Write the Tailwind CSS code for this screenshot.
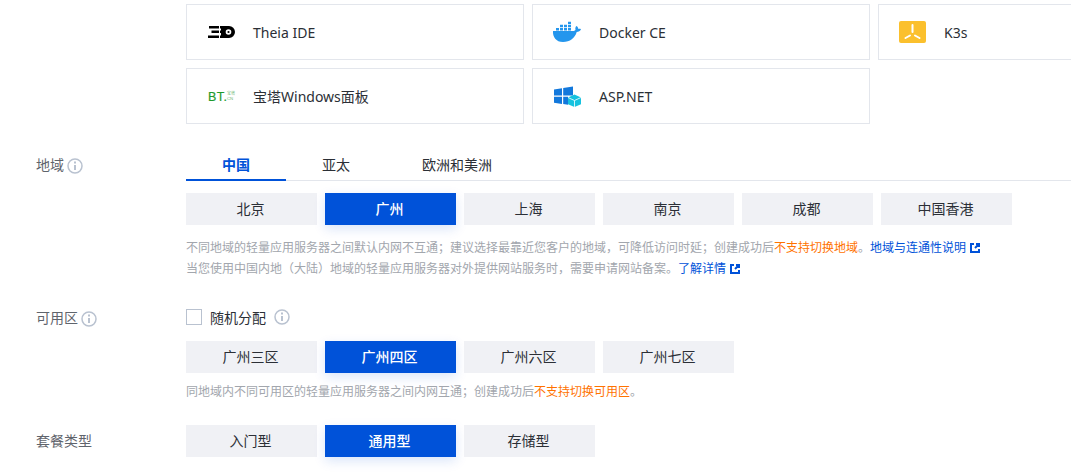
<!DOCTYPE html>
<html lang="zh-CN">
<head>
    <meta charset="UTF-8">
    <title>轻量应用服务器</title>
    <script src="https://cdn.jsdelivr.net/npm/@tailwindcss/browser@4"></script>
</head>
<body class="bg-white overflow-hidden h-[474px] w-[1071px] text-[14px] text-[#2b2f36] font-['Noto_Sans','Noto_Sans_CJK_SC',sans-serif]">

    <!-- 镜像 -->
    <div class="pl-[186px] pt-[4px] w-[1071px] overflow-hidden grid grid-cols-[338px_338px_338px] gap-2 auto-rows-[56px]">
        <div class="border border-[#e3e6ec] flex items-center">
            <svg class="ml-[21px] w-[27px] h-[14px]" viewBox="0 0 27 14">
                <path fill="#000" d="M12 1h9a6 6 0 0 1 0 12H12v-2.500h1V8h-1V5.500h1V3.500h-1z"/>
                <circle cx="20.500" cy="7" r="2.800" fill="#fff"/><circle cx="20.500" cy="7" r="1.100" fill="#000"/>
                <path fill="#000" d="M1 1h10v2.500H1zM3.500 5.500H11V8H3.500zM0 10.500h11V13H0z"/>
            </svg>
            <span class="ml-[18px]">Theia IDE</span>
        </div>
        <div class="border border-[#e3e6ec] flex items-center">
            <svg class="ml-[19px] w-[30px] h-[22px]" viewBox="0 0 30 22">
                <path fill="#2496ed" d="M1 10h20c1 0 2-.5 2.500-1-.5-2 .2-3.500 1-4 1 .7 1.700 1.700 1.800 3 1-.3 2-.2 2.700.3-.8 2-2.500 2.700-4.300 2.700C23 17 18 21 11 21 4 21 .6 16 1 10z"/>
                <path fill="#2496ed" d="M4 7h3v2.500H4zM8 7h3v2.500H8zM12 7h3v2.500h-3zM16 7h3v2.500h-3zM8 3.800h3v2.500H8zM12 3.800h3v2.500h-3zM16 3.800h3v2.500h-3zM16 .8h3v2.300h-3z"/>
            </svg>
            <span class="ml-[17px]">Docker CE</span>
        </div>
        <div class="border border-[#e3e6ec] flex items-center">
            <svg class="ml-[20px] w-[27px] h-[22px]" viewBox="0 0 27 22">
                <rect width="27" height="22" rx="2" fill="#fbc02d"/>
                <path stroke="#fff" stroke-width="2" stroke-linecap="round" fill="none" d="M13.500 4v7M6.500 17l4.500-2.500M20.500 17l-4.500-2.500"/>
            </svg>
            <span class="ml-[18px]">K3s</span>
        </div>
        <div class="border border-[#e3e6ec] flex items-center">
            <svg class="ml-[21px] w-[27px] h-[16px] overflow-visible" viewBox="0 -3 27 16">
                <text x="0" y="9.500" font-size="12.500" letter-spacing="0.400" stroke="#1e9a2c" stroke-width="0.200" fill="#1e9a2c" font-family="Liberation Sans">BT.</text>
                <text x="19" y="4.200" font-size="4" fill="#6fb878" font-family="Noto Sans CJK SC">宝塔</text>
                <text x="19" y="9.200" font-size="4.300" fill="#6fb878" font-family="Liberation Sans">CN</text>
            </svg>
            <span class="ml-[18px]">宝塔Windows面板</span>
        </div>
        <div class="border border-[#e3e6ec] flex items-center">
            <svg class="ml-[21px] w-[27px] h-[21px]" viewBox="0 0 27 21">
                <path fill="#1278dc" d="M0 3.500 8 2.300v7.200H0zM9.200 2.100 19 .6v8.900H9.200zM0 10.700h8v7.200L0 16.700zM9.200 10.700H14v8l-4.800-.7z"/>
                <path fill="#16c2df" d="M20.500 8.500 27 11.500v6.800L20.500 21 14 18.300v-6.800z"/>
                <path stroke="#fff" stroke-width=".8" fill="none" d="M14 11.500l6.500 3 6.500-3M20.500 14.500V21"/>
            </svg>
            <span class="ml-[18px]">ASP.NET</span>
        </div>
    </div>

    <!-- 地域 -->
    <div class="flex mt-[26px]">
        <div class="w-[186px] pl-[36px] pt-[5px] shrink-0 flex items-start text-[#5f646c]">
            <span class="leading-[20px]">地域</span>
            <svg class="ml-[3px] mt-[3px] w-[16px] h-[16px]" viewBox="0 0 16 16">
                <circle cx="8" cy="8" r="7" fill="none" stroke="#b9c2d0" stroke-width="1.500"/>
                <path stroke="#b9c2d0" stroke-width="2" d="M8 7v5M8 3.500v2"/>
            </svg>
        </div>
        <div class="flex-1">
            <div class="flex h-[31px] border-b border-[#e3e6ec]">
                <div class="w-[100px] h-[31px] border-b-2 border-[#0052d9] text-[#0052d9] font-bold text-center leading-[30px]">中国</div>
                <div class="w-[100px] text-center leading-[30px]">亚太</div>
                <div class="w-[142px] text-center leading-[30px]">欧洲和美洲</div>
            </div>
            <div class="flex gap-2 mt-[12px]">
                <button class="w-[131px] h-[32px] pb-[2px] pr-[2px] bg-[#f0f1f5]">北京</button>
                <button class="w-[131px] h-[32px] pb-[2px] pr-[2px] bg-[#0052d9] text-white font-medium shadow-[0_4px_12px_rgba(0,82,217,0.15)]">广州</button>
                <button class="w-[131px] h-[32px] pb-[2px] pr-[2px] bg-[#f0f1f5]">上海</button>
                <button class="w-[131px] h-[32px] pb-[2px] pr-[2px] bg-[#f0f1f5]">南京</button>
                <button class="w-[131px] h-[32px] pb-[2px] pr-[2px] bg-[#f0f1f5]">成都</button>
                <button class="w-[131px] h-[32px] pb-[2px] pr-[2px] bg-[#f0f1f5]">中国香港</button>
            </div>
            <div class="mt-[12px] text-[12px] leading-[21px] text-[#a2a6ad]">
                <p class="flex items-center">不同地域的轻量应用服务器之间默认内网不互通；建议选择最靠近您客户的地域，可降低访问时延；创建成功后<span class="text-[#ff7200]">不支持切换地域</span>。<span class="text-[#0052d9]">地域与连通性说明</span>
                    <svg class="ml-[4px] w-[10px] h-[10px]" viewBox="0 0 10 10"><path fill="none" stroke="#0052d9" stroke-width="2" d="M4 1H1v8h8V6M5 5l4-4M6 .9h3.100V4"/></svg>
                </p>
                <p class="flex items-center">当您使用中国内地（大陆）地域的轻量应用服务器对外提供网站服务时，需要申请网站备案。<span class="text-[#0052d9]">了解详情</span>
                    <svg class="ml-[4px] w-[10px] h-[10px]" viewBox="0 0 10 10"><path fill="none" stroke="#0052d9" stroke-width="2" d="M4 1H1v8h8V6M5 5l4-4M6 .9h3.100V4"/></svg>
                </p>
            </div>
        </div>
    </div>

    <!-- 可用区 -->
    <div class="flex mt-[20px]">
        <div class="w-[186px] pl-[36px] pt-[9px] shrink-0 flex items-start text-[#5f646c]">
            <span class="leading-[20px]">可用区</span>
            <svg class="ml-[3px] mt-[3px] w-[16px] h-[16px]" viewBox="0 0 16 16">
                <circle cx="8" cy="8" r="7" fill="none" stroke="#b9c2d0" stroke-width="1.500"/>
                <path stroke="#b9c2d0" stroke-width="2" d="M8 7v5M8 3.500v2"/>
            </svg>
        </div>
        <div class="flex-1">
            <div class="flex items-center h-[20px] mt-[8px]">
                <span class="w-[16px] h-[16px] border border-[#b9c2d0] bg-white"></span>
                <span class="ml-[8px]">随机分配</span>
                <svg class="ml-[8px] w-[16px] h-[16px]" viewBox="0 0 16 16">
                    <circle cx="8" cy="8" r="7" fill="none" stroke="#b9c2d0" stroke-width="1.500"/>
                    <path stroke="#b9c2d0" stroke-width="2" d="M8 7v5M8 3.500v2"/>
                </svg>
            </div>
            <div class="flex gap-2 mt-[14px]">
                <button class="w-[131px] h-[32px] pb-[2px] pr-[2px] bg-[#f0f1f5]">广州三区</button>
                <button class="w-[131px] h-[32px] pb-[2px] pr-[2px] bg-[#0052d9] text-white font-medium shadow-[0_4px_12px_rgba(0,82,217,0.15)]">广州四区</button>
                <button class="w-[131px] h-[32px] pb-[2px] pr-[2px] bg-[#f0f1f5]">广州六区</button>
                <button class="w-[131px] h-[32px] pb-[2px] pr-[2px] bg-[#f0f1f5]">广州七区</button>
            </div>
            <p class="mt-[8px] text-[12px] leading-[21px] text-[#a2a6ad]">同地域内不同可用区的轻量应用服务器之间内网互通；创建成功后<span class="text-[#ff7200]">不支持切换可用区</span>。</p>
        </div>
    </div>

    <!-- 套餐类型 -->
    <div class="flex mt-[23px]">
        <div class="w-[186px] pl-[36px] pt-[6px] shrink-0 text-[#5f646c] leading-[20px]">套餐类型</div>
        <div class="flex gap-2">
            <button class="w-[131px] h-[32px] pb-[2px] pr-[2px] bg-[#f0f1f5]">入门型</button>
            <button class="w-[131px] h-[32px] pb-[2px] pr-[2px] bg-[#0052d9] text-white font-medium shadow-[0_4px_12px_rgba(0,82,217,0.15)]">通用型</button>
            <button class="w-[131px] h-[32px] pb-[2px] pr-[2px] bg-[#f0f1f5]">存储型</button>
        </div>
    </div>

</body>
</html>
